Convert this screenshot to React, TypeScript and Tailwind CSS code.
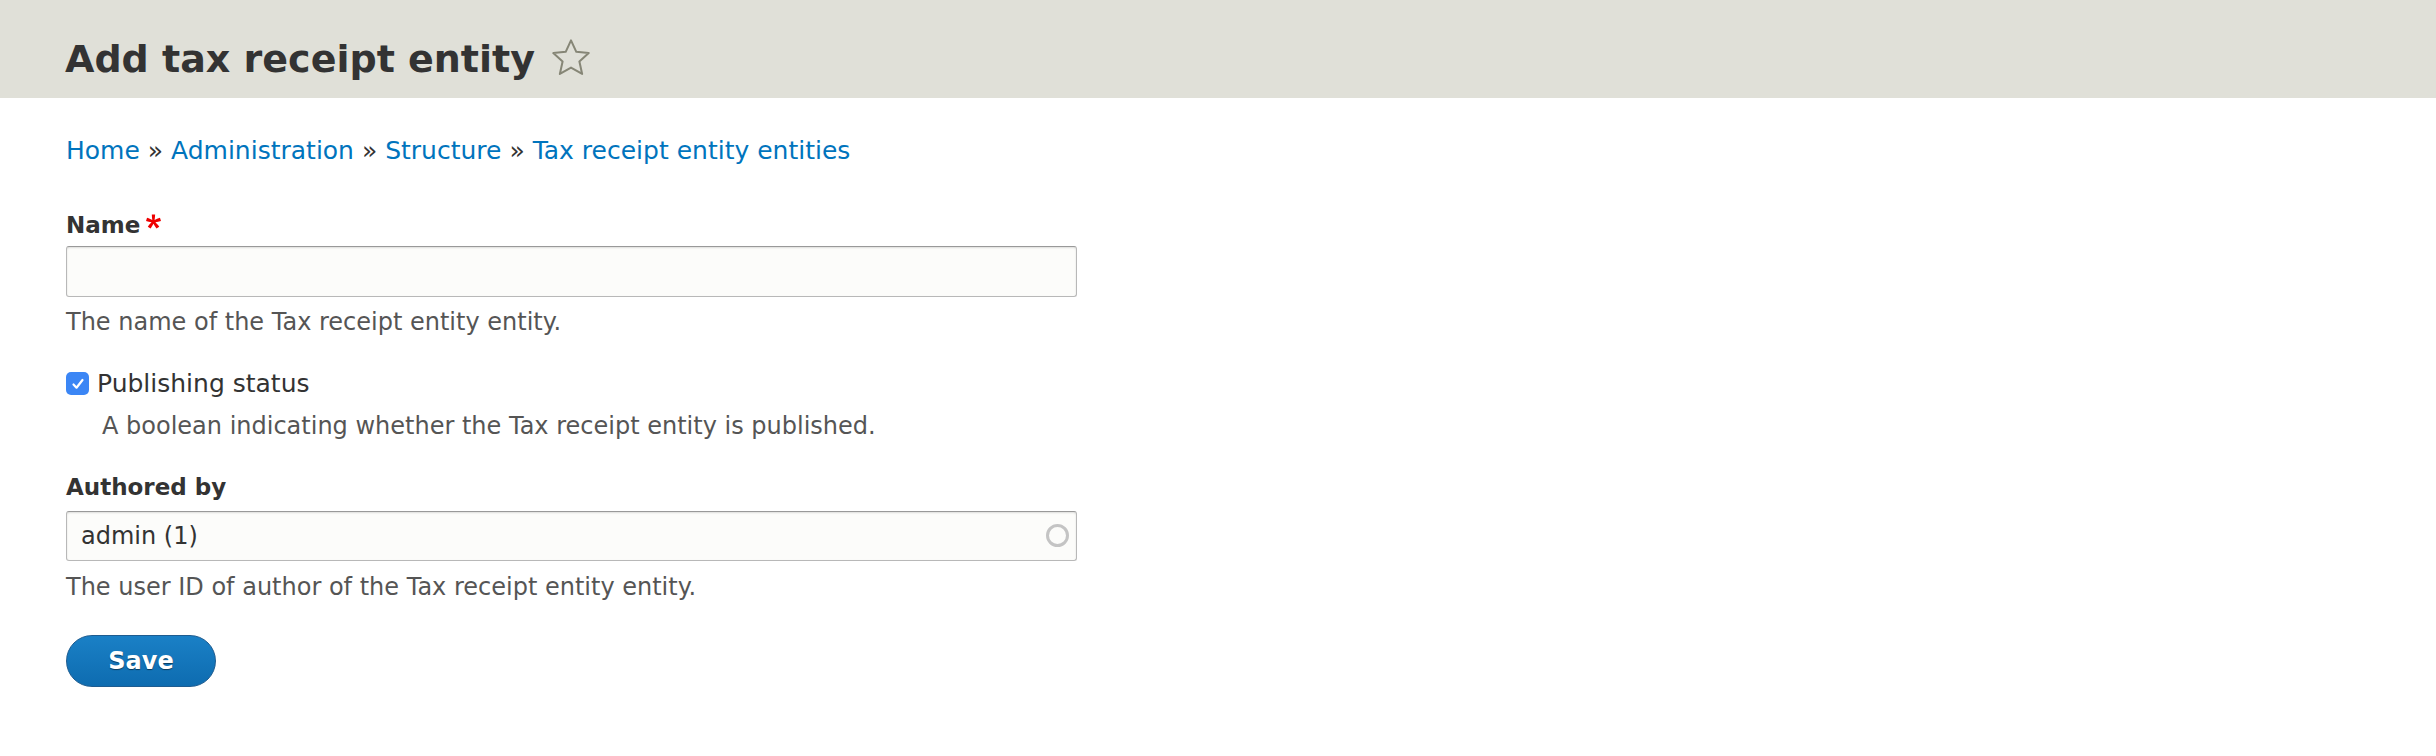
import { useState } from "react";

const crumbs = ["Home", "Administration", "Structure", "Tax receipt entity entities"];

function StarIcon() {
  return (
    <svg width="38" height="37" viewBox="1.6 1.6 20.8 20" className="ml-[17px] mt-[-3px]">
      <path
        d="M12 2.2l2.9 6.3 6.8.7-5.1 4.6 1.5 6.8L12 17.1l-6.1 3.5 1.5-6.8-5.1-4.6 6.8-.7z"
        fill="none"
        stroke="#868676"
        strokeWidth="1.1"
        strokeLinejoin="round"
      />
    </svg>
  );
}

function RequiredMark() {
  return (
    <svg width="15" height="15" viewBox="0 0 16 16" className="ml-[6px] self-start mt-[3px]">
      <path
        fill="#ee0000"
        d="M0,7.562l1.114-3.438c2.565,0.906,4.43,1.688,5.59,2.35C6.398,3.553,6.237,1.544,6.22,0.447h3.511c-0.05,1.597-0.234,3.6-0.558,6.003c1.664-0.838,3.566-1.613,5.714-2.325L16,7.562c-2.05,0.678-4.06,1.131-6.028,1.356c0.984,0.856,2.372,2.381,4.166,4.575l-2.906,2.059c-0.935-1.274-2.041-3.009-3.316-5.206c-1.194,2.275-2.244,4.013-3.147,5.206l-2.856-2.059c1.872-2.307,3.211-3.832,4.017-4.575C3.849,8.516,1.879,8.062,0,7.562"
      />
    </svg>
  );
}

export default function App() {
  const [name, setName] = useState("");
  const [published, setPublished] = useState(true);
  const [author, setAuthor] = useState("admin (1)");

  return (
    <div className="min-h-screen bg-white font-['DejaVu_Sans',sans-serif] text-[#333]">
      {/* page title */}
      <header className="h-[98px] bg-[#e0e0d8] pl-[65px] pt-[36px]">
        <h1 className="flex items-center text-[38px] font-bold leading-[46px] text-[#333]">
          Add tax receipt entity
          <StarIcon />
        </h1>
      </header>

      <main className="pl-[66px]">
        {/* breadcrumb */}
        <nav className="mt-[38px] text-[25px] leading-[30px] text-[#333]">
          {crumbs.map((c, i) => (
            <span key={c}>
              {i > 0 && <span> » </span>}
              <a href="#" className="text-[#0074bd] hover:underline">
                {c}
              </a>
            </span>
          ))}
        </nav>

        <form onSubmit={(e) => e.preventDefault()}>
          {/* name */}
          <div className="mt-[45px]">
            <label className="flex items-center text-[23px] font-bold leading-[29px]">
              Name
              <RequiredMark />
            </label>
            <input
              value={name}
              onChange={(e) => setName(e.target.value)}
              className="mt-[6px] block h-[51px] w-[1011px] rounded-[3px] border border-[#b8b8b8] border-t-[#999] bg-[#fcfcfa] px-[12px] text-[24px] shadow-[inset_0_1px_2px_rgba(0,0,0,0.125)] outline-none"
            />
            <div className="mt-[11px] text-[24px] leading-[29px] text-[#555]">
              The name of the Tax receipt entity entity.
            </div>
          </div>

          {/* publishing status */}
          <div className="mt-[32px]">
            <label className="flex items-center gap-[8px] text-[25px] leading-[29px] text-[#333]">
              <button
                type="button"
                onClick={() => setPublished(!published)}
                className={
                  published
                    ? "flex h-[23px] w-[23px] items-center justify-center rounded-[5px] bg-[#3b86f5]"
                    : "flex h-[23px] w-[23px] items-center justify-center rounded-[5px] border border-[#999] bg-white"
                }
              >
                {published && (
                  <svg width="14" height="14" viewBox="0 0 14 14">
                    <path d="M2.5 7.5l3 3.2L11.5 3" fill="none" stroke="#fff" strokeWidth="2.2" strokeLinecap="round" strokeLinejoin="round" />
                  </svg>
                )}
              </button>
              Publishing status
            </label>
            <div className="mt-[14px] pl-[36px] text-[24px] leading-[29px] text-[#555]">
              A boolean indicating whether the Tax receipt entity is published.
            </div>
          </div>

          {/* author */}
          <div className="mt-[32px]">
            <label className="block text-[23px] font-bold leading-[29px]">Authored by</label>
            <div className="relative mt-[9px] w-[1011px]">
              <input
                value={author}
                onChange={(e) => setAuthor(e.target.value)}
                className="block h-[50px] w-full rounded-[3px] border border-[#b8b8b8] border-t-[#999] bg-[#fcfcfa] pl-[14px] pr-[40px] text-[24px] text-[#333] shadow-[inset_0_1px_2px_rgba(0,0,0,0.125)] outline-none"
              />
              <span className="absolute right-[8px] top-[13px] h-[23px] w-[23px] rounded-full border-[3px] border-[#c4c4c4]" />
            </div>
            <div className="mt-[12px] text-[24px] leading-[29px] text-[#555]">
              The user ID of author of the Tax receipt entity entity.
            </div>
          </div>

          <button
            type="submit"
            className="mt-[33px] h-[52px] w-[150px] rounded-full border border-[#1e5c90] bg-[linear-gradient(#1a80c6,#0e6cb0)] text-[24px] font-bold text-white [text-shadow:0_1px_1px_rgba(0,0,0,0.5)]"
          >
            Save
          </button>
        </form>
      </main>
    </div>
  );
}
